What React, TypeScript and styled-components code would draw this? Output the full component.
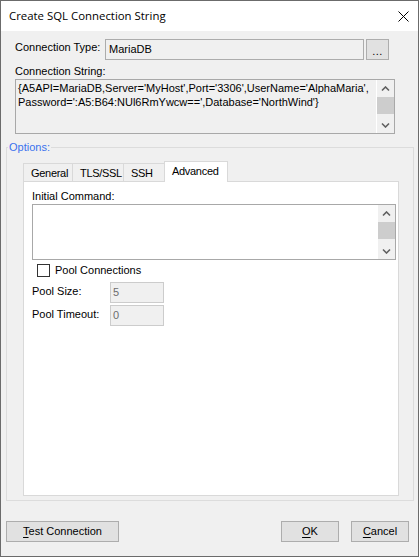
import React from 'react';
import styled, { createGlobalStyle } from 'styled-components';

const GlobalStyle = createGlobalStyle`
  html,
  body {
    margin: 0;
    padding: 0;
    background: #ffffff;
  }

  body {
    font-family: 'Liberation Sans', Arial, sans-serif;
    font-size: 11px;
    color: #000000;
  }
`;

const Window = styled.div`
  width: 419px;
  height: 557px;
  box-sizing: border-box;
  border: 1px solid #6b6b6b;
  background: #f0f0f0;
  display: flex;
  flex-direction: column;
`;

const TitleBar = styled.div`
  height: 30px;
  flex-shrink: 0;
  background: #ffffff;
  display: flex;
  align-items: center;
  justify-content: space-between;
  padding: 0 9px 0 8px;
  font-family: 'Open Sans', 'Noto Sans', sans-serif;
  font-size: 11.4px;
  line-height: 16px;
`;

const CloseButton = styled.svg`
  width: 11px;
  height: 11px;
  display: block;
`;

const Body = styled.div`
  flex: 1;
  display: flex;
  flex-direction: column;
  padding: 8px 4px 14px 5px;
  min-height: 0;
`;

const TopSection = styled.div`
  display: flex;
  flex-direction: column;
  padding-left: 9px;
`;

const TypeRow = styled.div`
  display: flex;
  height: 21px;
`;

const Label = styled.div<{ $width?: number }>`
  line-height: 13px;
  height: 13px;
  white-space: nowrap;
  ${(p) => (p.$width ? `width: ${p.$width}px; flex-shrink: 0;` : '')}
`;

const TypeLabel = styled(Label)`
  margin-top: 2px;
`;

const ReadOnlyInput = styled.div`
  width: 259px;
  height: 21px;
  box-sizing: border-box;
  border: 1px solid #acacac;
  background: #f0f0f0;
  padding: 0 3px;
  line-height: 19px;
`;

const BrowseButton = styled.div`
  width: 23px;
  height: 21px;
  box-sizing: border-box;
  margin-left: 2px;
  border: 1px solid #adadad;
  background: #e1e1e1;
  display: flex;
  align-items: center;
  justify-content: center;
  padding-top: 2px;
  font-size: 11px;
  color: #000;
  letter-spacing: 0.5px;
`;

const StringLabel = styled(Label)`
  margin-top: 5px;
`;

const MemoBox = styled.div<{ $width: number; $height: number; $readOnly?: boolean }>`
  width: ${(p) => p.$width}px;
  height: ${(p) => p.$height}px;
  box-sizing: border-box;
  margin-top: 1px;
  border: 1px solid #a8a8a8;
  background: ${(p) => (p.$readOnly ? '#f0f0f0' : '#ffffff')};
  display: flex;
`;

const MemoText = styled.div`
  flex: 1;
  padding: 1px 2px;
  line-height: 14px;
  white-space: nowrap;
  overflow: hidden;
`;

const ScrollBar = styled.div`
  width: 17px;
  flex-shrink: 0;
  background: #f0f0f0;
  border-left: 1px solid #ffffff;
  display: flex;
  flex-direction: column;
`;

const ScrollArrow = styled.div`
  height: 17px;
  display: flex;
  align-items: center;
  justify-content: center;
`;

const ScrollTrack = styled.div`
  flex: 1;
`;

const ScrollThumb = styled.div`
  height: 17px;
  background: #cdcdcd;
`;

const GroupBox = styled.fieldset`
  flex: 1;
  margin: 7px 0 0;
  min-width: 0;
  min-height: 0;
  border: 1px solid #dcdcdc;
  padding: 7px 14px 4px 16px;
  display: flex;
  flex-direction: column;
`;

const GroupLegend = styled.legend`
  margin-left: -15px;
  padding: 0 1px;
  line-height: 13px;
  color: #3a72ee;
`;

const TabStrip = styled.div`
  display: flex;
  align-items: flex-end;
  height: 20px;
  flex-shrink: 0;
  position: relative;
  z-index: 1;
`;

const Tab = styled.div<{ $active?: boolean; $width: number }>`
  width: ${(p) => p.$width}px;
  box-sizing: border-box;
  height: ${(p) => (p.$active ? 21 : 18)}px;
  margin-bottom: ${(p) => (p.$active ? -1 : 0)}px;
  margin-right: -1px;
  border: 1px solid #d9d9d9;
  border-bottom: none;
  background: ${(p) => (p.$active ? '#ffffff' : '#f0f0f0')};
  padding: 3px 0 0 7px;
  line-height: 13px;
  letter-spacing: -0.3px;
  white-space: nowrap;
  overflow: hidden;
`;

const TabPanel = styled.div`
  flex: 1;
  border: 1px solid #d9d9d9;
  background: #ffffff;
  padding: 8px 1px 0 8px;
  display: flex;
  flex-direction: column;
`;

const CheckRow = styled.label`
  display: flex;
  align-items: center;
  height: 13px;
  margin: 4px 0 0 5px;
  gap: 5px;
  line-height: 13px;
`;

const CheckBox = styled.span`
  width: 13px;
  height: 13px;
  box-sizing: border-box;
  border: 1px solid #333333;
  background: #ffffff;
`;

const FieldRow = styled.div<{ $gap: number }>`
  display: flex;
  align-items: flex-start;
  height: 21px;
  margin-top: ${(p) => p.$gap}px;
`;

const FieldLabel = styled(Label)`
  width: 78px;
  flex-shrink: 0;
  margin-top: 2px;
`;

const DisabledInput = styled.div`
  width: 54px;
  height: 21px;
  box-sizing: border-box;
  border: 1px solid #cccccc;
  background: #f0f0f0;
  color: #6d6d6d;
  padding: 0 2px;
  line-height: 19px;
  margin-top: -1px;
`;

const ButtonRow = styled.div`
  display: flex;
  gap: 12px;
  margin-top: 20px;
  padding-right: 5px;
`;

const PushButton = styled.div<{ $width: number }>`
  width: ${(p) => p.$width}px;
  height: 21px;
  box-sizing: border-box;
  border: 1px solid #adadad;
  background: #e1e1e1;
  display: flex;
  align-items: center;
  justify-content: center;
  line-height: 13px;

  u {
    text-decoration: underline;
    text-underline-offset: 2px;
  }
`;

const Spacer = styled.div`
  flex: 1;
`;

const Chevron: React.FC<{ down?: boolean }> = ({ down }) => (
  <svg width="9" height="6" viewBox="0 0 9 6">
    <path
      d={down ? 'M1 1.5 L4.5 5 L8 1.5' : 'M1 4.5 L4.5 1 L8 4.5'}
      fill="none"
      stroke="#606060"
      strokeWidth="1.6"
    />
  </svg>
);

const Scroller: React.FC = () => (
  <ScrollBar>
    <ScrollArrow>
      <Chevron />
    </ScrollArrow>
    <ScrollTrack>
      <ScrollThumb />
    </ScrollTrack>
    <ScrollArrow>
      <Chevron down />
    </ScrollArrow>
  </ScrollBar>
);

const App: React.FC = () => {
  return (
    <>
      <GlobalStyle />
      <Window>
        <TitleBar>
          <span>Create SQL Connection String</span>
          <CloseButton viewBox="0 0 11 11">
            <path d="M0.5 0.5 L10.5 10.5 M10.5 0.5 L0.5 10.5" stroke="#000" strokeWidth="1" />
          </CloseButton>
        </TitleBar>
        <Body>
          <TopSection>
            <TypeRow>
              <TypeLabel $width={90}>Connection Type:</TypeLabel>
              <ReadOnlyInput>MariaDB</ReadOnlyInput>
              <BrowseButton>...</BrowseButton>
            </TypeRow>
            <StringLabel>Connection String:</StringLabel>
            <MemoBox $width={380} $height={55} $readOnly>
              <MemoText>
                <div>{"{A5API=MariaDB,Server='MyHost',Port='3306',UserName='AlphaMaria',"}</div>
                <div>{"Password=':A5:B64:NUl6RmYwcw==',Database='NorthWind'}"}</div>
              </MemoText>
              <Scroller />
            </MemoBox>
          </TopSection>

          <GroupBox>
            <GroupLegend>Options:</GroupLegend>
            <TabStrip>
              <Tab $width={50}>General</Tab>
              <Tab $width={52}>TLS/SSL</Tab>
              <Tab $width={42}>SSH</Tab>
              <Tab $width={64} $active>
                Advanced
              </Tab>
            </TabStrip>
            <TabPanel>
              <Label>Initial Command:</Label>
              <MemoBox $width={364} $height={56}>
                <MemoText />
                <Scroller />
              </MemoBox>
              <CheckRow>
                <CheckBox />
                Pool Connections
              </CheckRow>
              <FieldRow $gap={6}>
                <FieldLabel>Pool Size:</FieldLabel>
                <DisabledInput>5</DisabledInput>
              </FieldRow>
              <FieldRow $gap={2}>
                <FieldLabel>Pool Timeout:</FieldLabel>
                <DisabledInput>0</DisabledInput>
              </FieldRow>
            </TabPanel>
          </GroupBox>

          <ButtonRow>
            <PushButton $width={113}>
              <span>
                <u>T</u>est Connection
              </span>
            </PushButton>
            <Spacer />
            <PushButton $width={58}>
              <span>
                <u>O</u>K
              </span>
            </PushButton>
            <PushButton $width={58}>
              <span>
                <u>C</u>ancel
              </span>
            </PushButton>
          </ButtonRow>
        </Body>
      </Window>
    </>
  );
};

export default App;
